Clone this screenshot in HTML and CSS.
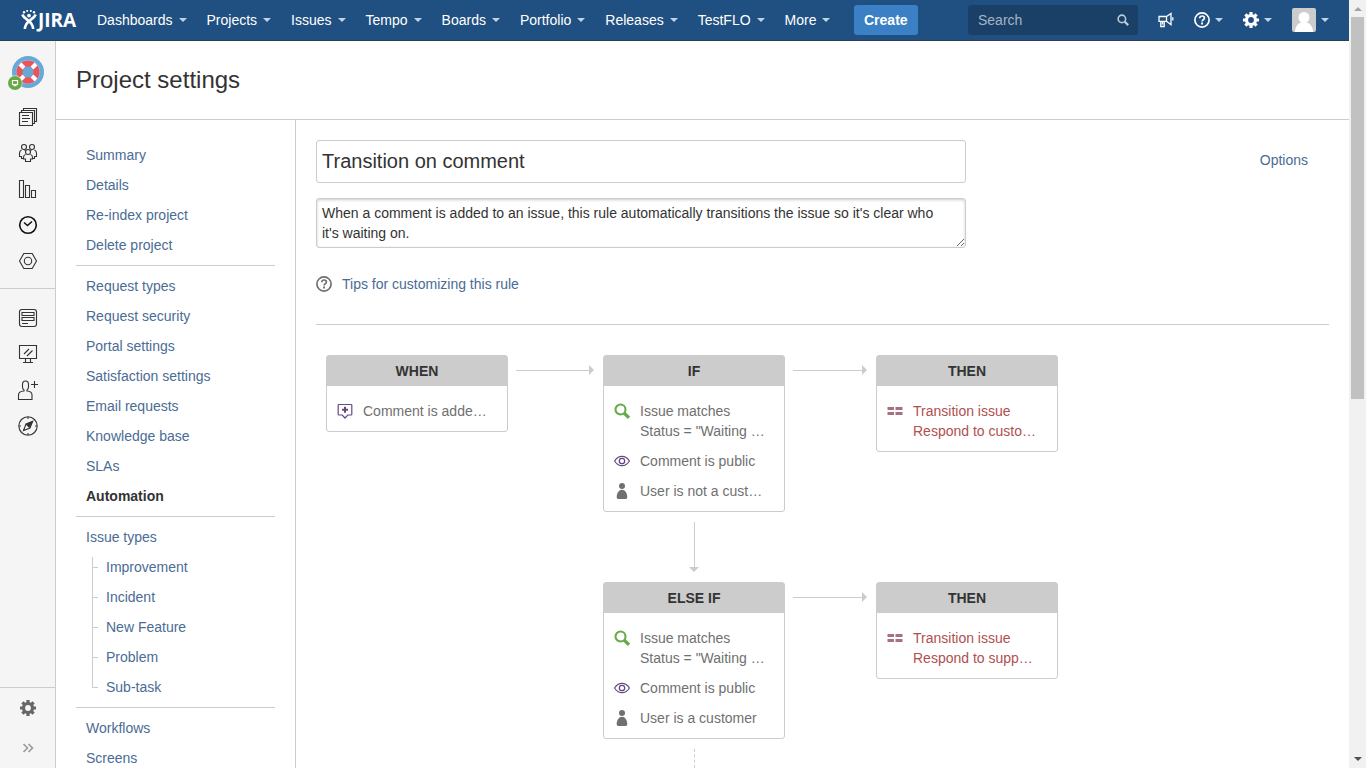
FILE: index.html
```html
<!DOCTYPE html>
<html lang="en">
<head>
    <meta charset="UTF-8">
    <meta name="viewport" content="width=device-width, initial-scale=1.0">
    <title>Project settings - JIRA</title>
    <link rel="stylesheet" href="styles.css">
</head>
<body>

    <!-- shared icons -->
    <svg class="sprite" aria-hidden="true">
        <symbol id="gear" viewBox="0 0 16 16">
            <circle cx="8" cy="8" r="4.5" fill="none" stroke="currentColor" stroke-width="3.2"/>
            <path d="M8 0v3M8 13v3M0 8h3M13 8h3M2.4 2.4l2 2M11.6 11.6l2 2M2.4 13.6l2-2M11.6 4.4l2-2" fill="none" stroke="currentColor" stroke-width="3.2"/>
        </symbol>
        <symbol id="help" viewBox="0 0 16 16">
            <circle cx="8" cy="8" r="7.1" fill="none" stroke="currentColor" stroke-width="1.7"/>
            <path d="M5.7 6.3c0-1.5 1-2.3 2.4-2.3s2.3.8 2.3 2c0 1.7-2.3 1.7-2.3 3.4" fill="none" stroke="currentColor" stroke-width="1.7"/>
            <path d="M7.1 10.6h1.9v1.8H7.1z" fill="currentColor"/>
        </symbol>
        <symbol id="lens" viewBox="0 0 16 16">
            <circle cx="6.5" cy="6.5" r="5" fill="none" stroke="currentColor" stroke-width="2.1"/>
            <path d="M10 10l5 4.800" fill="none" stroke="currentColor" stroke-width="3.2"/>
        </symbol>
        <symbol id="eye" viewBox="0 0 16 16">
            <path d="M.6 8C2.4 5 5 3.3 8 3.3S13.600 5 15.400 8C13.600 11 11 12.700 8 12.700S2.400 11 .6 8z" fill="none" stroke="currentColor" stroke-width="1.2"/>
            <circle cx="8" cy="8" r="2.7" fill="none" stroke="currentColor" stroke-width="1.3"/>
        </symbol>
        <symbol id="user" viewBox="0 0 16 16">
            <circle cx="8" cy="3" r="3" fill="currentColor"/>
            <path d="M8 6.700c3 0 5.300 3.300 5.300 7.300 0 1.300-.5 2-1.600 2H4.300c-1.100 0-1.600-.7-1.600-2C2.700 10 5 6.700 8 6.700z" fill="currentColor"/>
        </symbol>
        <symbol id="comment" viewBox="0 0 16 16">
            <path d="M2 1.500h12q.8 0 .8.800v8.900q0 .8-.8.800H10.800L8 15 5.200 12H2q-.8 0-.8-.8V2.300q0-.8.8-.8z" fill="none" stroke="currentColor" stroke-width="1.200"/>
            <path d="M8 3.700v6M5 6.700h6" fill="none" stroke="currentColor" stroke-width="2"/>
        </symbol>
        <symbol id="transition" viewBox="0 0 16 16">
            <path d="M.5 4H7v3H.5zM8.500 4H15.500v3H8.500zM.5 9H7v3H.5zM8.500 9H15.500v3H8.500z" fill="currentColor"/>
        </symbol>
    </svg>

    <div class="window">
        <div class="page">

            <header class="topbar">
                <a class="logo" href="#" aria-label="JIRA">
                    <svg width="16" height="20" viewBox="0 0 16 20" aria-hidden="true">
                        <g fill="#fff">
                            <circle cx="3" cy="2.300" r="1.200"/>
                            <circle cx="6.200" cy=".9" r="1"/>
                            <circle cx="9.800" cy=".9" r="1"/>
                            <circle cx="13" cy="2.300" r="1.200"/>
                            <circle cx="8" cy="5.600" r="1.900"/>
                        </g>
                        <path d="M1.300 4.500C3.500 10.500 11.500 9.500 12.200 19M14.700 4.500C12.500 10.500 4.500 9.500 3.800 19" fill="none" stroke="#fff" stroke-width="2.600"/>
                    </svg>
                    <span>JIRA</span>
                </a>
                <nav class="menu">
                    <a class="drop" href="#">Dashboards</a>
                    <a class="drop" href="#">Projects</a>
                    <a class="drop" href="#">Issues</a>
                    <a class="drop" href="#">Tempo</a>
                    <a class="drop" href="#">Boards</a>
                    <a class="drop" href="#">Portfolio</a>
                    <a class="drop" href="#">Releases</a>
                    <a class="drop" href="#">TestFLO</a>
                    <a class="drop" href="#">More</a>
                </nav>
                <button class="create" type="button">Create</button>
                <form class="search">
                    <input type="text" placeholder="Search" aria-label="Search">
                    <svg width="12" height="12" aria-hidden="true"><use href="#lens"/></svg>
                </form>
                <nav class="tools">
                    <a href="#" aria-label="Feedback">
                        <svg width="16" height="16" viewBox="0 0 16 16" fill="none" stroke="currentColor" stroke-width="1.300" aria-hidden="true">
                            <path d="M1 4.500h7.500v4.800H1zM8.500 4.500l4.500-3v11.200L8.500 9.300M2.800 9.500v5h3.400v-5M4.500 10v2.500M14.800 5.300v3.200"/>
                        </svg>
                    </a>
                    <a class="drop" href="#" aria-label="Help"><svg width="16" height="16" aria-hidden="true"><use href="#help"/></svg></a>
                    <a class="drop" href="#" aria-label="Administration"><svg width="16" height="16" aria-hidden="true"><use href="#gear"/></svg></a>
                    <a class="drop" href="#" aria-label="User profile">
                        <svg width="24" height="24" viewBox="0 0 24 24" aria-hidden="true">
                            <rect width="24" height="24" rx="2" fill="#ccc"/>
                            <circle cx="12" cy="9.500" r="5.500" fill="#fff"/>
                            <path d="M3 24c0-5 2.800-8.500 6-9.500h6c3.200 1 6 4.500 6 9.500z" fill="#fff"/>
                        </svg>
                    </a>
                </nav>
            </header>

            <div class="body">
                <aside class="sidebar">
                    <div class="side-group">
                        <a class="project" href="#" aria-label="Project">
                            <svg width="40" height="34" viewBox="0 0 40 34" aria-hidden="true">
                                <circle cx="20" cy="16" r="16" fill="#65a9d8"/>
                                <circle cx="20" cy="16" r="11.800" fill="none" stroke="#93c4e6" stroke-width="1"/>
                                <circle cx="20" cy="16" r="8.500" fill="none" stroke="#e8555a" stroke-width="6"/>
                                <path d="M12 8l4 4M28 8l-4 4M12 24l4-4M28 24l-4-4" stroke="#fff" stroke-width="4"/>
                                <circle cx="7" cy="27" r="7.500" fill="#f5f5f5"/>
                                <circle cx="7" cy="27" r="7" fill="#67ab49"/>
                                <path d="M4.500 24.500h5v4h-5z" fill="none" stroke="#fff" stroke-width="1.200"/>
                                <path d="M5.500 29.500h3" stroke="#fff" stroke-width="1.400"/>
                            </svg>
                        </a>
                        <a class="side-icon" href="#" aria-label="Queues">
                            <svg width="20" height="20" viewBox="0 0 20 20" aria-hidden="true"><path d="M1.500 5.500h13v13h-13zM3.500 5V3.500h13v13H15M5.500 3V1.500h13v13H17M4 8.500h7M4 11.500h8M4 14.500h6"/></svg>
                        </a>
                        <a class="side-icon" href="#" aria-label="Customers">
                            <svg width="20" height="20" viewBox="0 0 20 20" aria-hidden="true">
                                <circle cx="6" cy="4" r="2.500"/><circle cx="14" cy="4" r="2.500"/><circle cx="10" cy="9" r="2.500"/>
                                <path d="M3.500 7Q1.500 8 1.500 10v3.500h2v2h2M16.500 7q2 1 2 3v3.500h-2v2h-2M7.500 7.500h-1M12.500 7.500h1M7.500 11.500q-2 .5-2 3v1.500h2v2.500h5V16h2v-1.500q0-2.500-2-3"/>
                            </svg>
                        </a>
                        <a class="side-icon" href="#" aria-label="Reports">
                            <svg width="20" height="20" viewBox="0 0 20 20" aria-hidden="true"><path d="M1.500 1.500h4v17h-4zM7.500 6.500h4v12h-4zM13.500 11.500h4v7h-4z"/></svg>
                        </a>
                        <a class="side-icon" href="#" aria-label="Tempo">
                            <svg class="strong" width="20" height="20" viewBox="0 0 20 20" aria-hidden="true"><circle cx="10" cy="10" r="8.300"/><path d="M6 7.500l3.500 3 4.500-4"/></svg>
                        </a>
                        <a class="side-icon" href="#" aria-label="Components">
                            <svg width="20" height="20" viewBox="0 0 20 20" aria-hidden="true"><path d="M5.800 2.500h8.400L18.500 10l-4.300 7.500H5.800L1.500 10z"/><circle cx="10" cy="10" r="3.700"/></svg>
                        </a>
                    </div>
                    <div class="side-group channels">
                        <a class="side-icon" href="#" aria-label="Knowledge base">
                            <svg width="20" height="20" viewBox="0 0 20 20" aria-hidden="true"><rect x="1.500" y="1.500" width="17" height="17" rx="2.500"/><path d="M4 4.500h12v3H4zM4 9.500h12v3H4zM4 15.500h6"/></svg>
                        </a>
                        <a class="side-icon" href="#" aria-label="Customer portal">
                            <svg width="20" height="20" viewBox="0 0 20 20" aria-hidden="true"><path d="M1.500 1.500h17v13h-17zM7.500 15v3M12.500 15v3M5 18.500h10M6 10l5-5M9 12l5.500-5.500"/></svg>
                        </a>
                        <a class="side-icon" href="#" aria-label="Invite team">
                            <svg width="22" height="22" viewBox="0 0 22 22" aria-hidden="true"><path d="M5.500 5.500q0-3.500 3-3.500t3 3.500v2.500q0 2-1.500 3v1q5 .3 5 4v4.500H1.500V16q0-3.700 5.500-4v-1q-1.500-1-1.500-3zM17.500 2v7M14 5.500h7"/></svg>
                        </a>
                        <a class="side-icon" href="#" aria-label="Getting started">
                            <svg width="20" height="20" viewBox="0 0 20 20" aria-hidden="true"><circle cx="10" cy="10" r="9.200"/><path d="M10 1v2M10 17v2M1 10h2M17 10h2M14.500 5.500L12 12l-6.500 2.500L8 8z"/><path d="M14.500 5.500L8.500 8.500l2.800 2.800z" fill="#333"/></svg>
                        </a>
                    </div>
                    <div class="side-group bottom">
                        <a class="side-action" href="#" aria-label="Project administration"><svg width="16" height="16" aria-hidden="true"><use href="#gear"/></svg></a>
                        <button class="side-action expand" type="button" aria-label="Expand sidebar">
                            <svg width="12" height="10" viewBox="0 0 12 10" aria-hidden="true"><path d="M1.500 1l4 4-4 4M6.500 1l4 4-4 4" fill="none" stroke="currentColor" stroke-width="1.600"/></svg>
                        </button>
                    </div>
                </aside>

                <div class="content">
                    <div class="page-header">
                        <h1>Project settings</h1>
                    </div>
                    <div class="columns">
                        <nav class="settings">
                            <ul>
                                <li><a href="#">Summary</a></li>
                                <li><a href="#">Details</a></li>
                                <li><a href="#">Re-index project</a></li>
                                <li><a href="#">Delete project</a></li>
                            </ul>
                            <ul>
                                <li><a href="#">Request types</a></li>
                                <li><a href="#">Request security</a></li>
                                <li><a href="#">Portal settings</a></li>
                                <li><a href="#">Satisfaction settings</a></li>
                                <li><a href="#">Email requests</a></li>
                                <li><a href="#">Knowledge base</a></li>
                                <li><a href="#">SLAs</a></li>
                                <li><a class="active" href="#">Automation</a></li>
                            </ul>
                            <ul>
                                <li><a href="#">Issue types</a>
                                    <ul class="tree">
                                        <li><a href="#">Improvement</a></li>
                                        <li><a href="#">Incident</a></li>
                                        <li><a href="#">New Feature</a></li>
                                        <li><a href="#">Problem</a></li>
                                        <li><a href="#">Sub-task</a></li>
                                    </ul>
                                </li>
                            </ul>
                            <ul>
                                <li><a href="#">Workflows</a></li>
                                <li><a href="#">Screens</a></li>
                            </ul>
                        </nav>

                        <main class="rule">
                            <div class="rule-head">
                                <form class="rule-form">
                                    <input class="rule-name" type="text" value="Transition on comment" aria-label="Rule name">
                                    <textarea class="rule-text" rows="2" aria-label="Rule description">When a comment is added to an issue, this rule automatically transitions the issue so it's clear who it's waiting on.</textarea>
                                </form>
                                <a class="options" href="#">Options</a>
                            </div>
                            <a class="tips" href="#">
                                <svg width="16" height="16" aria-hidden="true"><use href="#help"/></svg>
                                Tips for customizing this rule
                            </a>

                            <div class="flow">
                                <section class="card">
                                    <h2>WHEN</h2>
                                    <ul>
                                        <li><svg class="purple" width="16" height="16" aria-hidden="true"><use href="#comment"/></svg><span>Comment is adde…</span></li>
                                    </ul>
                                </section>
                                <div class="arrow"></div>
                                <section class="card">
                                    <h2>IF</h2>
                                    <ul>
                                        <li><svg class="green" width="16" height="16" aria-hidden="true"><use href="#lens"/></svg><span>Issue matches<br>Status = "Waiting …</span></li>
                                        <li><svg class="purple" width="16" height="16" aria-hidden="true"><use href="#eye"/></svg><span>Comment is public</span></li>
                                        <li><svg width="16" height="16" aria-hidden="true"><use href="#user"/></svg><span>User is not a cust…</span></li>
                                    </ul>
                                </section>
                                <div class="arrow"></div>
                                <section class="card error">
                                    <h2>THEN</h2>
                                    <ul>
                                        <li><svg width="16" height="16" aria-hidden="true"><use href="#transition"/></svg><span>Transition issue<br>Respond to custo…</span></li>
                                    </ul>
                                </section>

                                <div class="arrow-down"></div>

                                <section class="card branch">
                                    <h2>ELSE IF</h2>
                                    <ul>
                                        <li><svg class="green" width="16" height="16" aria-hidden="true"><use href="#lens"/></svg><span>Issue matches<br>Status = "Waiting …</span></li>
                                        <li><svg class="purple" width="16" height="16" aria-hidden="true"><use href="#eye"/></svg><span>Comment is public</span></li>
                                        <li><svg width="16" height="16" aria-hidden="true"><use href="#user"/></svg><span>User is a customer</span></li>
                                    </ul>
                                </section>
                                <div class="arrow"></div>
                                <section class="card error">
                                    <h2>THEN</h2>
                                    <ul>
                                        <li><svg width="16" height="16" aria-hidden="true"><use href="#transition"/></svg><span>Transition issue<br>Respond to supp…</span></li>
                                    </ul>
                                </section>

                                <div class="arrow-down dashed"></div>
                            </div>
                        </main>
                    </div>
                </div>
            </div>
        </div>

        <div class="scrollbar" aria-hidden="true">
            <span class="up"></span>
            <div class="track"><div class="thumb"></div></div>
            <span class="down"></span>
        </div>
    </div>

</body>
</html>
```
FILE: styles.css
```css
* {
    box-sizing: border-box;
}
body {
    margin: 0;
    font-family: "Liberation Sans", Arial, sans-serif;
    font-size: 14px;
    line-height: 20px;
    color: #333;
    background: #fff;
}
a {
    color: #4a6c95;
    text-decoration: none;
}
ul {
    list-style: none;
    margin: 0;
    padding: 0;
}
svg {
    display: block;
    flex: none;
}
button, input, textarea {
    font-family: inherit;
    font-size: 14px;
}
.sprite {
    display: none;
}
.window {
    display: flex;
    height: 100vh;
    overflow: hidden;
}
.page {
    flex: 1;
    min-width: 0;
    display: flex;
    flex-direction: column;
}

/* top bar */
.topbar {
    flex: none;
    display: flex;
    align-items: center;
    height: 41px;
    padding: 0 10px 0 21px;
    background: #205081;
    border-bottom: 1px solid #2e3d54;
}
.topbar a {
    color: #fff;
}
.logo {
    display: flex;
    align-items: center;
    gap: 1px;
    width: 66px;
    font-family: "Open Sans", sans-serif;
    font-size: 19px;
    font-weight: 700;
}
.menu, .tools {
    display: flex;
    align-items: center;
}
.menu {
    flex: 0 1 757px;
}
.menu a, .tools a {
    display: flex;
    align-items: center;
    height: 40px;
    padding: 0 10px;
}
.drop::after {
    content: "";
    margin-left: 5px;
    border: 4px solid transparent;
    border-top-color: #c3d3e4;
    border-bottom: 0;
}
.menu .drop::after {
    margin-left: 6px;
}
.create {
    height: 30px;
    margin-left: 10px;
    padding: 0 10px;
    border: 0;
    border-radius: 3px;
    background: #3b7fc4;
    color: #fff;
    font-weight: bold;
}
.search {
    display: flex;
    align-items: center;
    width: 170px;
    height: 30px;
    margin: 0 10px 0 auto;
    padding: 0 9px 0 10px;
    border-radius: 3px;
    background: #1b4067;
    color: #b8c9da;
}
.search input {
    flex: 1;
    min-width: 0;
    padding: 0;
    border: 0;
    background: none;
    color: #fff;
}
.search input::placeholder {
    color: #a3b5c8;
}

/* icon sidebar */
.body {
    flex: 1;
    min-height: 0;
    display: flex;
}
.sidebar {
    flex: none;
    display: flex;
    flex-direction: column;
    width: 56px;
    background: #f5f5f5;
    border-right: 1px solid #ccc;
}
.side-group {
    padding: 15px 0 9px;
}
.channels {
    padding-top: 11px;
    border-top: 1px solid #ccc;
}
.bottom {
    margin-top: auto;
    padding: 0;
    border-top: 1px solid #ccc;
}
.project, .side-icon, .side-action {
    display: flex;
    align-items: center;
    justify-content: center;
}
.project {
    margin-bottom: 9px;
}
.side-icon {
    height: 36px;
}
.side-icon svg {
    fill: none;
    stroke: #333;
    stroke-width: 1.1;
}
.side-icon .strong {
    stroke: #111;
    stroke-width: 1.6;
}
.side-action {
    width: 100%;
    height: 40px;
    color: #666;
}
.expand {
    padding: 0;
    border: 0;
    background: none;
    color: #999;
}

/* settings page */
.content {
    flex: 1;
    min-width: 0;
    display: flex;
    flex-direction: column;
}
.page-header {
    flex: none;
    padding: 24px 20px;
    border-bottom: 1px solid #ccc;
}
h1 {
    margin: 0;
    font-size: 24px;
    font-weight: normal;
    line-height: 30px;
}
.columns {
    flex: 1;
    min-height: 0;
    display: flex;
    overflow: hidden;
}
.settings {
    flex: none;
    width: 240px;
    padding: 20px;
    border-right: 1px solid #ccc;
    overflow: hidden;
}
.settings > ul + ul {
    margin-top: 5px;
    padding-top: 5px;
    border-top: 1px solid #ccc;
}
.settings a {
    display: block;
    padding: 5px 10px;
}
.settings .active {
    color: #333;
    font-weight: bold;
}
.tree {
    margin-left: 16px;
}
.tree li {
    display: flex;
    align-items: center;
    background: linear-gradient(#ccc, #ccc) 0 0 / 1px 100% no-repeat;
}
.tree li:first-child {
    background-position: 0 5px;
}
.tree li:last-child {
    background-size: 1px 50%;
}
.tree li::before {
    content: "";
    width: 6px;
    border-top: 1px solid #ccc;
}
.tree a {
    padding: 5px 8px;
}

/* automation rule */
.rule {
    flex: 1;
    min-width: 0;
    padding: 20px;
    overflow: hidden;
}
.rule-head {
    display: flex;
    justify-content: space-between;
    align-items: flex-start;
}
.rule-form {
    flex: 0 1 650px;
    display: flex;
    flex-direction: column;
    gap: 15px;
}
.rule-name, .rule-text {
    width: 100%;
    border: 1px solid #ccc;
    border-radius: 3px;
    color: #333;
}
.rule-name {
    height: 43px;
    padding: 0 5px;
    font-size: 20px;
}
.rule-text {
    height: 50px;
    padding: 4px 20px 4px 5px;
    line-height: 20px;
    box-shadow: inset 0 1px 3px #ccc;
    resize: both;
    overflow: hidden;
}
.options {
    padding: 10px 21px;
}
.tips {
    display: flex;
    align-items: center;
    gap: 10px;
    margin: 26px 0 30px;
}
.tips svg {
    color: #707070;
}
.flow {
    display: grid;
    grid-template-columns: 182px 95px 182px 91px 182px;
    align-items: start;
    padding: 30px 10px;
    border-top: 1px solid #ccc;
}
.card {
    border: 1px solid #ccc;
    border-radius: 3px;
    color: #707070;
}
.card h2 {
    margin: 0;
    padding: 5px;
    background: #ccc;
    color: #333;
    font-size: 14px;
    font-weight: bold;
    line-height: 20px;
    text-align: center;
}
.card ul {
    display: flex;
    flex-direction: column;
    gap: 10px;
    padding: 15px 10px 10px;
}
.card li {
    display: flex;
    gap: 10px;
    white-space: nowrap;
}
.card svg {
    margin-top: 2px;
}
.green {
    color: #67ab49;
}
.purple {
    color: #654982;
}
.card.error {
    color: #b0504f;
}
.error svg {
    color: #a7707c;
}
.branch {
    grid-column: 3;
}
.arrow, .arrow-down {
    display: flex;
    align-items: center;
}
.arrow {
    margin: 10px 9px 0 8px;
}
.arrow::before {
    content: "";
    flex: 1;
    border-top: 1px solid #ccc;
}
.arrow::after {
    content: "";
    border: 5px solid transparent;
    border-left-color: #ccc;
    border-right: 0;
}
.arrow-down {
    grid-column: 3;
    flex-direction: column;
    height: 70px;
    padding: 10px 0;
}
.arrow-down::before {
    content: "";
    flex: 1;
    border-left: 1px solid #ccc;
}
.arrow-down::after {
    content: "";
    border: 5px solid transparent;
    border-top-color: #ccc;
    border-bottom: 0;
}
.dashed::before {
    border-left-style: dashed;
}

/* page scrollbar */
.scrollbar {
    flex: none;
    display: flex;
    flex-direction: column;
    align-items: center;
    justify-content: space-between;
    width: 17px;
    padding: 7px 0;
    background: #f1f1f1;
}
.track {
    flex: 1;
    width: 13px;
    margin: 6px 0;
}
.thumb {
    height: 52%;
    background: #c1c1c1;
}
.up, .down {
    border: 4px solid transparent;
}
.up {
    border-top: 0;
    border-bottom-color: #a3a3a3;
}
.down {
    border-bottom: 0;
    border-top-color: #505050;
}
```
